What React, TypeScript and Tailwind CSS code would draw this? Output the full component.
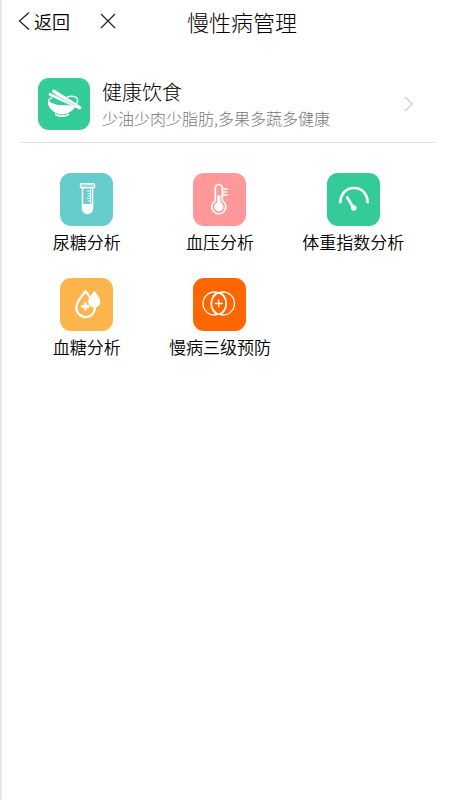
import type { ReactNode } from "react";

interface IMenuItem {
  label: string;
  color: string;
  icon: ReactNode;
}

const iconProps = {
  viewBox: "0 0 53 53",
  fill: "none",
  stroke: "#fff",
  strokeLinecap: "round" as const,
  strokeLinejoin: "round" as const,
  className: "size-full",
  "aria-hidden": true,
};

function BowlIcon() {
  return (
    <svg {...iconProps}>
      {/* bowl body and foot */}
      <path
        d="M10.300 22.500c-.9 6 2.500 10.500 7.200 12.500v3c3.500 2.200 10.500 2.200 14 0v-3c2.600-1 5-3 6.500-5.700l-8-1.800c-7 1-15.500 0-19.700-5z"
        fill="#fff"
        stroke="none"
      />
      <path d="M18.300 36.300c3.500 1.500 9.500 1.500 12.500 0" stroke="#33cc99" strokeWidth="0.900" />
      {/* rim */}
      <path d="M30 19.300c4.500-1.600 9.500-.3 10.300 2.700.5 1.800-.4 3.200-1.300 4.300" strokeWidth="1.500" />
      <path d="M10.800 23c.3-1.200 1.500-2 3-2.500" strokeWidth="1.500" />
      {/* chopsticks */}
      <path d="M16 13.500l26.500 16.700" strokeWidth="3.400" />
      <path d="M12.300 16.700l29.700 13.500" strokeWidth="3" />
      <path d="M20 17.500l17 9" strokeWidth="2" />
      <path d="M13.500 15.300l23 12" stroke="#33cc99" strokeWidth="0.500" />
    </svg>
  );
}

function TubeIcon() {
  return (
    <svg {...iconProps}>
      <path d="M22.500 15v20.500a5 5 0 0 0 10 0V15" strokeWidth="1.500" />
      <rect x="20.500" y="10.700" width="14" height="4" rx="1" strokeWidth="1.500" fill="#8fdad9" />
      <path d="M22.500 31h10v4.500a5 5 0 0 1-10 0z" fill="#fff" stroke="none" />
      <path d="M27 18h3.500M28 20.500h2.500M28 23h2.500M27 25.500h3.500M28 28h2.500" strokeWidth="0.900" />
      <path d="M30.500 17v14" strokeWidth="0.900" />
    </svg>
  );
}

function ThermometerIcon() {
  return (
    <svg {...iconProps}>
      <path d="M22.300 27.700V15a3.500 3.500 0 0 1 7 0v12.700a7 7 0 1 1-7 0z" strokeWidth="1.700" />
      <circle cx="25.800" cy="33.700" r="4.600" fill="#fff" stroke="none" />
      <path d="M25.800 23.500v9" strokeWidth="3" />
      <path d="M30.500 16h4M30.500 19h3M30.500 22h4" strokeWidth="1.300" />
    </svg>
  );
}

function GaugeIcon() {
  return (
    <svg {...iconProps}>
      <path d="M13.300 29.300C13.800 20.500 19 15 27 15s13.200 5.500 13.700 14.300" strokeWidth="2.600" />
      <path d="M20.300 24.500l6.200 10.200" strokeWidth="2.800" />
      <circle cx="26.800" cy="35" r="2.800" fill="#fff" stroke="none" />
    </svg>
  );
}

function BloodDropIcon() {
  return (
    <svg {...iconProps}>
      <path
        d="M29.500 18.500c-1.300-1.800-2.600-3.500-4-5.200-4 5-9.200 10.500-9.200 15.700a9.300 9.300 0 0 0 18.600 1.500"
        strokeWidth="2.400"
      />
      <path
        d="M34.300 12.700c3 4.300 6 7.300 6 11a6 6 0 0 1-12 0c0-3.700 3-6.700 6-11z"
        fill="#fff"
        stroke="none"
      />
      <path d="M25.300 24.300v8M21.300 28.300h8" strokeWidth="2.800" strokeLinecap="butt" />
    </svg>
  );
}

function PreventionIcon() {
  return (
    <svg {...iconProps}>
      <circle cx="21.500" cy="25.500" r="11.500" strokeWidth="1.300" />
      <circle cx="30" cy="25.500" r="11.500" strokeWidth="1.300" />
      <ellipse cx="25.700" cy="25.500" rx="7.700" ry="11" strokeWidth="1.100" />
      <path d="M25.700 22v7M22.200 25.500h7" strokeWidth="1.300" />
    </svg>
  );
}

const menuItems: IMenuItem[] = [
  { label: "尿糖分析", color: "bg-[#66cccc]", icon: <TubeIcon /> },
  { label: "血压分析", color: "bg-[#ff9999]", icon: <ThermometerIcon /> },
  { label: "体重指数分析", color: "bg-[#33cc99]", icon: <GaugeIcon /> },
  { label: "血糖分析", color: "bg-[#fcb54c]", icon: <BloodDropIcon /> },
  { label: "慢病三级预防", color: "bg-[#ff6600]", icon: <PreventionIcon /> },
];

function Header() {
  return (
    <header className="grid h-[42px] grid-cols-[1fr_auto_1fr] items-center pl-4">
      <div className="flex items-center gap-7">
        <button type="button" className="flex items-center gap-1 text-lg leading-6">
          <svg viewBox="0 0 12 20" className="h-5 w-3" fill="none" stroke="#222" strokeWidth="1.300" aria-hidden>
            <path d="M11 1.500L1.500 10l9.500 8.500" />
          </svg>
          返回
        </button>
        <button type="button" aria-label="关闭">
          <svg viewBox="0 0 20 20" className="size-5" fill="none" stroke="#222" strokeWidth="1.200" aria-hidden>
            <path d="M3 3l14 14M17 3L3 17" />
          </svg>
        </button>
      </div>
      <h1 className="pl-4 text-[22px] leading-8 font-light">慢性病管理</h1>
    </header>
  );
}

export default function App() {
  return (
    <div className="min-h-screen border-l-2 border-[#e8e8e8] bg-white font-['Noto_Sans_CJK_SC',sans-serif] font-[350] text-black">
      <Header />
      <main className="pt-[26px] pr-[14px] pl-[18px]">
        <a href="#diet" className="flex items-center border-b border-[#e0e0e0] px-[18px] pt-[10px] pb-3">
          <span className="size-[52px] shrink-0 rounded-[11px] bg-[#33cc99]">
            <BowlIcon />
          </span>
          <span className="ml-3 min-w-0 flex-1 font-light">
            <span className="block text-[20px] leading-7">健康饮食</span>
            <span className="block text-base leading-6 text-[#777]">少油少肉少脂肪,多果多蔬多健康</span>
          </span>
          <svg viewBox="0 0 18 18" className="size-[18px]" fill="none" stroke="#d0d0d0" strokeWidth="1.300" aria-hidden>
            <path d="M5 2l7.500 7L5 16" />
          </svg>
        </a>
        <nav className="grid grid-cols-3 gap-y-6 pt-[30px] pr-4">
          {menuItems.map((item) => (
            <a key={item.label} href="#analysis" className="flex flex-col items-center gap-1">
              <span className={`size-[53px] rounded-[11px] ${item.color}`}>{item.icon}</span>
              <span className="text-[17px] leading-6 whitespace-nowrap">{item.label}</span>
            </a>
          ))}
        </nav>
      </main>
    </div>
  );
}
